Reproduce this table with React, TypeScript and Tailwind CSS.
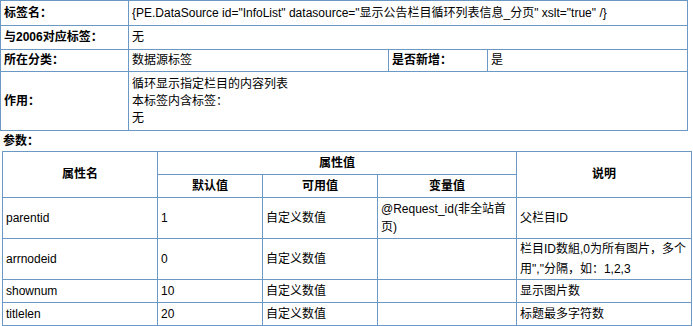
const font = '[font-family:"Liberation_Sans","Noto_Sans_CJK_SC",sans-serif]'

const params = [
  { name: 'parentid', def: '1', avail: '自定义数值', variable: '@Request_id(非全站首页)', desc: '父栏目ID', tall: true },
  { name: 'arrnodeid', def: '0', avail: '自定义数值', variable: '', desc: '栏目ID数組,0为所有图片，多个用","分隔，如：1,2,3', tall: true },
  { name: 'shownum', def: '10', avail: '自定义数值', variable: '', desc: '显示图片数', tall: false },
  { name: 'titlelen', def: '20', avail: '自定义数值', variable: '', desc: '标题最多字符数', tall: false },
]

const cell = 'border border-[#6b98c4] px-[3px] align-middle'
const head = 'border border-[#6b98c4] text-center font-bold align-middle'

export default function App() {
  return (
    <div className={`${font} min-h-screen w-[693px] bg-white text-[12px] leading-[17px] text-black`}>
      <table className="w-[687px] table-fixed border-collapse">
        <colgroup>
          <col className="w-[128px]" />
          <col className="w-[260px]" />
          <col className="w-[99px]" />
          <col className="w-[200px]" />
        </colgroup>
        <tbody>
          <tr className="h-[25px]">
            <td className={`${cell} font-bold`}>标签名：</td>
            <td className={cell} colSpan={3}>
              {'{PE.DataSource id="InfoList" datasource="显示公告栏目循环列表信息_分页" xslt="true" /}'}
            </td>
          </tr>
          <tr className="h-[24px]">
            <td className={`${cell} font-bold`}>与2006对应标签：</td>
            <td className={cell} colSpan={3}>无</td>
          </tr>
          <tr className="h-[22px]">
            <td className={`${cell} font-bold`}>所在分类：</td>
            <td className={cell}>数据源标签</td>
            <td className={`${cell} font-bold`}>是否新增：</td>
            <td className={cell}>是</td>
          </tr>
          <tr className="h-[59px]">
            <td className={`${cell} font-bold`}>作用：</td>
            <td className={cell} colSpan={3}>
              <div>循环显示指定栏目的内容列表</div>
              <div>本标签内含标签：</div>
              <div>无</div>
            </td>
          </tr>
        </tbody>
      </table>

      <div className="flex h-[20px] items-center px-[3px] font-bold">参数：</div>

      <table className="ml-[2px] w-[689px] table-fixed border-collapse">
        <colgroup>
          <col className="w-[155px]" />
          <col className="w-[105px]" />
          <col className="w-[115px]" />
          <col className="w-[139px]" />
          <col className="w-[175px]" />
        </colgroup>
        <thead>
          <tr className="h-[23px]">
            <th className={head} rowSpan={2}>属性名</th>
            <th className={head} colSpan={3}>属性值</th>
            <th className={head} rowSpan={2}>说明</th>
          </tr>
          <tr className="h-[23px]">
            <th className={head}>默认值</th>
            <th className={head}>可用值</th>
            <th className={head}>变量值</th>
          </tr>
        </thead>
        <tbody>
          {params.map((p) => (
            <tr key={p.name} className={p.tall ? 'h-[41px]' : 'h-[23px]'}>
              <td className={cell}>{p.name}</td>
              <td className={cell}>{p.def}</td>
              <td className={cell}>{p.avail}</td>
              <td className={`${cell} leading-[18px]`}>{p.variable}</td>
              <td className={`${cell} leading-[20px]`}>{p.desc}</td>
            </tr>
          ))}
        </tbody>
      </table>
    </div>
  )
}
